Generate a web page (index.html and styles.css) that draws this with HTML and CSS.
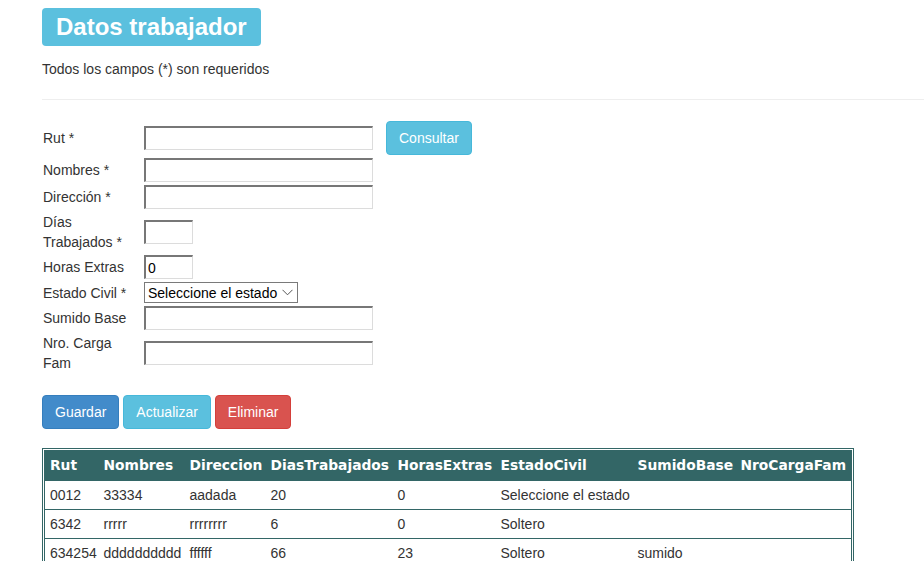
FILE: index.html
```html
<!DOCTYPE html>
<html lang="es">
<head>
<meta charset="utf-8">
<title>Datos trabajador</title>
<link rel="stylesheet" href="styles.css">
</head>
<body>
<div class="page">
  <h1 class="title">Datos trabajador</h1>
  <p class="note">Todos los campos (*) son requeridos</p>
  <hr class="rule">
  <form class="form">
    <label class="lbl">Rut *</label>
    <div class="field field-rut">
      <input class="inp inp-long" type="text">
      <button type="button" class="btn btn-info">Consultar</button>
    </div>
    <label class="lbl">Nombres *</label>
    <div class="field"><input class="inp inp-long" type="text"></div>
    <label class="lbl">Dirección *</label>
    <div class="field"><input class="inp inp-long" type="text"></div>
    <label class="lbl">Días Trabajados *</label>
    <div class="field"><input class="inp inp-short" type="text"></div>
    <label class="lbl">Horas Extras</label>
    <div class="field"><input class="inp inp-short" type="text" value="0"></div>
    <label class="lbl">Estado Civil *</label>
    <div class="field">
      <span class="sel-wrap">
        <select class="sel"><option>Seleccione el estado</option><option>Soltero</option><option>Casado</option></select>
        <svg class="chev" width="11" height="7" viewBox="0 0 11 7"><path d="M0.5 0.8 L5.5 5.8 L10.5 0.8" fill="none" stroke="#555" stroke-width="1"/></svg>
      </span>
    </div>
    <label class="lbl">Sumido Base</label>
    <div class="field"><input class="inp inp-long" type="text"></div>
    <label class="lbl">Nro. Carga Fam</label>
    <div class="field"><input class="inp inp-long" type="text"></div>
  </form>
  <div class="actions">
    <button type="button" class="btn btn-primary">Guardar</button>
    <button type="button" class="btn btn-info">Actualizar</button>
    <button type="button" class="btn btn-danger">Eliminar</button>
  </div>
  <div class="grid-wrap">
    <table class="grid">
      <colgroup>
        <col class="c1"><col class="c2"><col class="c3"><col class="c4"><col class="c5"><col class="c6"><col class="c7"><col class="c8">
      </colgroup>
      <thead>
        <tr><th>Rut</th><th>Nombres</th><th>Direccion</th><th>DiasTrabajados</th><th>HorasExtras</th><th>EstadoCivil</th><th>SumidoBase</th><th>NroCargaFam</th></tr>
      </thead>
      <tbody>
        <tr><td>0012</td><td>33334</td><td>aadada</td><td>20</td><td>0</td><td>Seleccione el estado</td><td></td><td></td></tr>
        <tr><td>6342</td><td>rrrrr</td><td>rrrrrrrr</td><td>6</td><td>0</td><td>Soltero</td><td></td><td></td></tr>
        <tr><td>634254</td><td>dddddddddd</td><td>ffffff</td><td>66</td><td>23</td><td>Soltero</td><td>sumido</td><td></td></tr>
      </tbody>
    </table>
  </div>
</div>
</body>
</html>
```
FILE: styles.css
```css
html, body {
  margin: 0;
  padding: 0;
  background: #fff;
}
body {
  font-family: "Liberation Sans", Arial, sans-serif;
  font-size: 14px;
  line-height: 20px;
  color: #333;
}
.page {
  padding: 8px 0 0 42px;
}
.title {
  display: inline-block;
  margin: 0;
  padding: 6px 14px;
  font-size: 24px;
  line-height: 26px;
  font-weight: bold;
  color: #fff;
  background: #5bc0de;
  border-radius: 4px;
}
.note {
  margin: 13px 0 0;
}
.rule {
  margin: 20px 0 0;
  border: 0;
  border-top: 1px solid #eee;
  height: 0;
}
.form {
  margin-top: 21px;
  display: grid;
  grid-template-columns: 98px auto;
  column-gap: 4px;
  row-gap: 3px;
  align-items: center;
  justify-items: start;
}
.lbl {
  padding-left: 1px;
  line-height: 20px;
}
.field {
  display: flex;
  align-items: center;
}
.field-rut {
  gap: 13px;
}
.inp {
  box-sizing: border-box;
  height: 24px;
  margin: 0;
  padding: 1px 2px;
  font-family: "Liberation Sans", Arial, sans-serif;
  font-size: 14px;
  color: #000;
  background: #fff;
  border-style: solid;
  border-width: 2px 1px 1px 2px;
  border-color: #777 #dcdcdc #dcdcdc #777;
}
.inp-long {
  width: 229px;
}
.inp-short {
  width: 49px;
}
.sel-wrap {
  position: relative;
  display: inline-block;
}
.sel {
  -webkit-appearance: none;
  appearance: none;
  box-sizing: border-box;
  width: 154px;
  height: 21px;
  margin: 0;
  padding: 0 18px 0 3px;
  font-family: "Liberation Sans", Arial, sans-serif;
  font-size: 14px;
  color: #000;
  background: #fff;
  border: 1px solid #7a7a7a;
  border-radius: 0;
}
.chev {
  position: absolute;
  right: 5px;
  top: 7px;
  pointer-events: none;
}
.btn {
  box-sizing: border-box;
  height: 34px;
  margin: 0;
  padding: 6px 12px;
  font-family: "Liberation Sans", Arial, sans-serif;
  font-size: 14px;
  line-height: 20px;
  color: #fff;
  border: 1px solid transparent;
  border-radius: 4px;
  cursor: pointer;
}
.btn-info {
  background: #5bc0de;
  border-color: #46b8da;
}
.btn-primary {
  background: #428bca;
  border-color: #357ebd;
}
.btn-danger {
  background: #d9534f;
  border-color: #d43f3a;
}
.actions {
  margin-top: 22px;
  display: flex;
  gap: 4px;
}
.grid-wrap {
  display: inline-block;
  margin-top: 19px;
  border: 1px solid #336666;
  padding: 1px;
}
.grid {
  border-collapse: collapse;
  table-layout: fixed;
  width: 807px;
  border-left: 1px solid #336666;
  border-right: 1px solid #336666;
}
.c1 { width: 54px; }
.c2 { width: 86px; }
.c3 { width: 81px; }
.c4 { width: 127px; }
.c5 { width: 103px; }
.c6 { width: 137px; }
.c7 { width: 103px; }
.c8 { width: 116px; }
.grid th {
  background: #336666;
  color: #fff;
  text-align: left;
  font-family: "DejaVu Sans", Verdana, sans-serif;
  font-weight: bold;
  font-size: 13.8px;
  line-height: 20px;
  padding: 5px 5px 5px;
  white-space: nowrap;
  overflow: hidden;
}
.grid td {
  padding: 4px 5px;
  line-height: 20px;
  border-top: 1px solid #336666;
  white-space: nowrap;
  overflow: hidden;
}
```
